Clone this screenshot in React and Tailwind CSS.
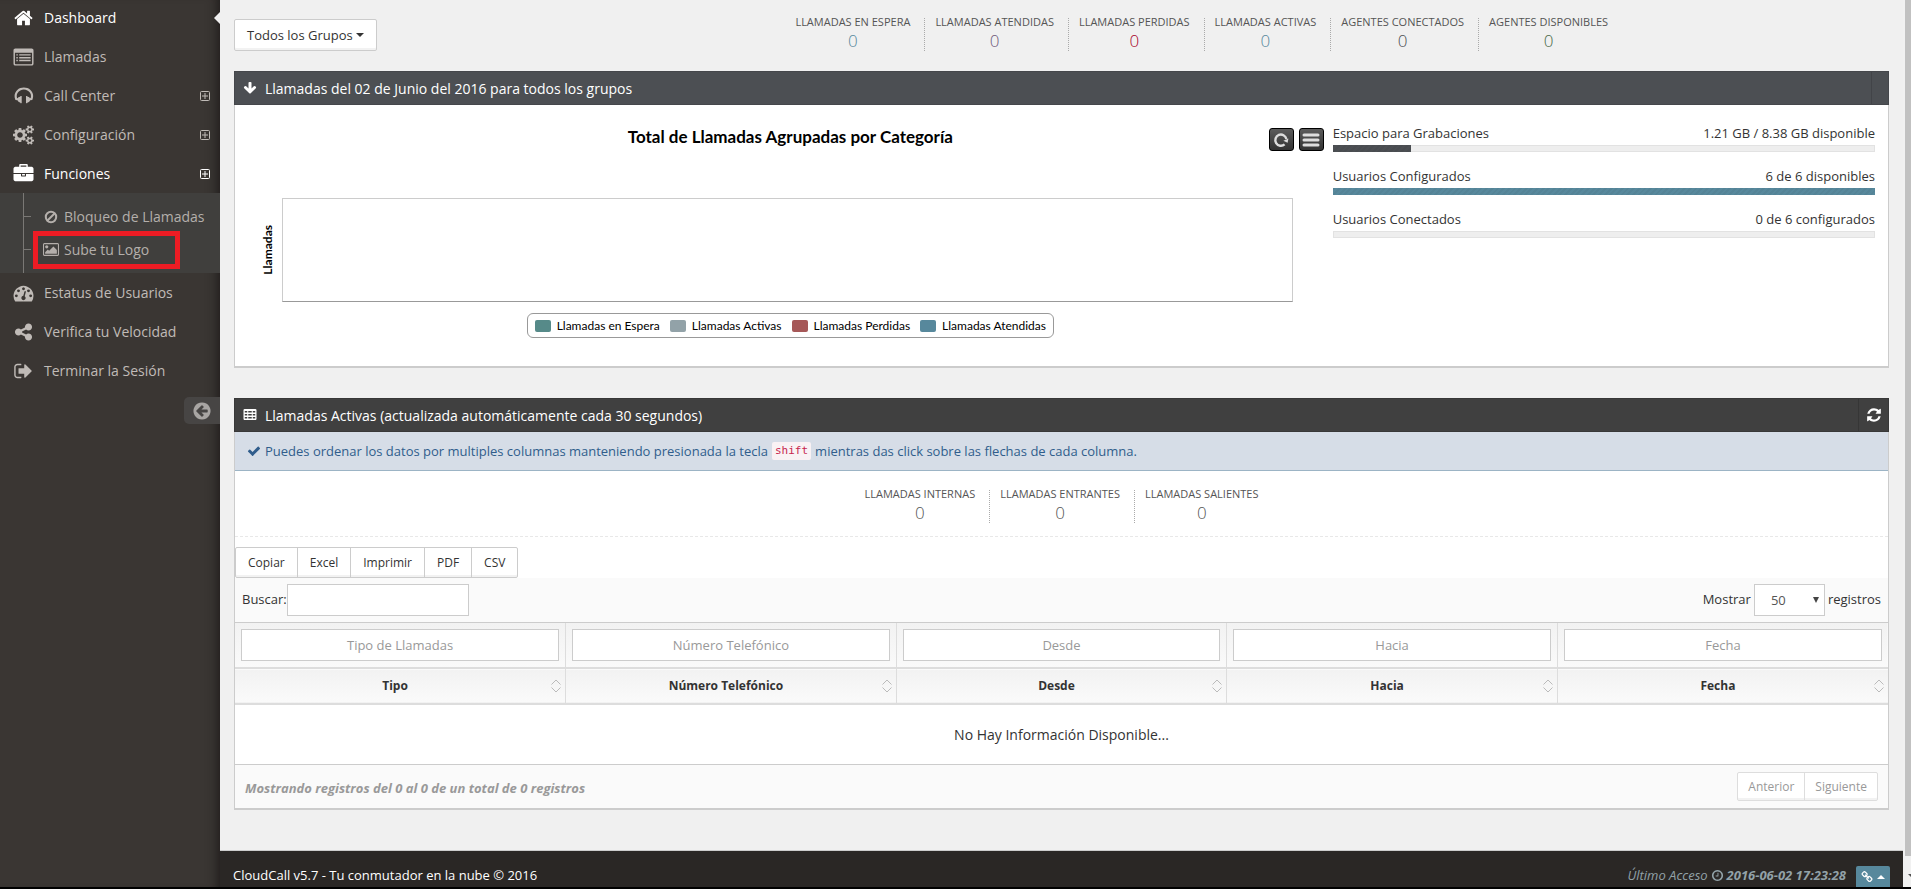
import React from "react";

const PATHS = {
  home: "M1472 992v480q0 26-19 45t-45 19h-384v-384h-256v384h-384q-26 0-45-19t-19-45v-480q0-1 .5-3t.5-3l575-474 575 474q1 2 1 6zm223-69l-62 74q-8 9-21 11h-3q-13 0-21-7l-692-577-692 577q-12 8-24 7-13-2-21-11l-62-74q-8-10-7-23.5t11-21.5l719-599q32-26 76-26t76 26l244 204v-195q0-14 9-23t23-9h192q14 0 23 9t9 23v408l219 182q10 8 11 21.5t-7 23.5z",
  list: "M160 128h1472q66 0 113 47t47 113v1216q0 66-47 113t-113 47h-1472q-66 0-113-47t-47-113v-1216q0-66 47-113t113-47zm-32 384v960q0 64 64 64h1408q64 0 64-64v-960zM256 640h128v128h-128zM512 640h1024v128h-1024zM256 896h128v128h-128zM512 896h1024v128h-1024zM256 1152h128v128h-128zM512 1152h1024v128h-1024z",
  headphones: "M1760 886q0 166-60 314l-20 49-185 33q-22 83-90.5 136.5t-156.5 53.5v32q0 14-9 23t-23 9h-64q-14 0-23-9t-9-23v-576q0-14 9-23t23-9h64q14 0 23 9t9 23v32q71 0 130 35.5t93 95.5l68-12q29-95 29-193 0-148-88-279t-236.5-209-315.5-78-315.5 78-236.5 209-88 279q0 98 29 193l68 12q34-60 93-95.5t130-35.5v-32q0-14 9-23t23-9h64q14 0 23 9t9 23v576q0 14-9 23t-23 9h-64q-14 0-23-9t-9-23v-32q-88 0-156.5-53.5t-90.5-136.5l-185-33-20-49q-60-148-60-314 0-151 67-291t179-242.5 266-163.5 320-61 320 61 266 163.5 179 242.5 67 291z",
  cogs: "M896 896q0-106-75-181t-181-75-181 75-75 181 75 181 181 75 181-75 75-181zm768 512q0-52-38-90t-90-38-90 38-38 90q0 53 37.5 90.5t90.5 37.5 90.5-37.5 37.5-90.5zm0-1024q0-52-38-90t-90-38-90 38-38 90q0 53 37.5 90.5t90.5 37.5 90.5-37.5 37.5-90.5zm-384 421v185q0 10-7 19.5t-16 10.5l-155 24q-11 35-32 76 34 48 90 115 7 11 7 20 0 12-7 19-23 30-82.5 89.5t-78.5 59.5q-11 0-21-7l-115-90q-37 19-77 31-11 108-23 155-7 24-30 24h-186q-11 0-20-7.5t-10-17.5l-23-153q-34-10-75-31l-118 89q-7 7-20 7-11 0-21-8-144-133-144-160 0-9 7-19 10-14 41-53t47-61q-23-44-35-82l-152-24q-10-1-17-9.5t-7-19.5v-185q0-10 7-19.5t16-10.5l155-24q11-35 32-76-34-48-90-115-7-11-7-20 0-12 7-20 22-30 82-89t79-59q11 0 21 7l115 90q34-18 77-32 11-108 23-154 7-24 30-24h186q11 0 20 7.5t10 17.5l23 153q34 10 75 31l118-89q8-7 20-7 11 0 21 8 144 133 144 160 0 8-7 19-12 16-42 54t-45 60q23 48 34 82l152 23q10 2 17 10.5t7 19.5zm640 533v140q0 16-149 31-12 27-30 52 51 113 51 138 0 4-4 7-122 71-124 71-8 0-46-47t-52-68q-20 2-30 2t-30-2q-14 21-52 68t-46 47q-2 0-124-71-4-3-4-7 0-25 51-138-18-25-30-52-149-15-149-31v-140q0-16 149-31 13-29 30-52-51-113-51-138 0-4 4-7 4-2 35-20t59-34 30-16q8 0 46 46.5t52 67.5q20-2 30-2t30 2q51-71 92-112l6-2q4 0 124 70 4 3 4 7 0 25-51 138 17 23 30 52 149 15 149 31zm0-1024v140q0 16-149 31-12 27-30 52 51 113 51 138 0 4-4 7-122 71-124 71-8 0-46-47t-52-68q-20 2-30 2t-30-2q-14 21-52 68t-46 47q-2 0-124-71-4-3-4-7 0-25 51-138-18-25-30-52-149-15-149-31v-140q0-16 149-31 13-29 30-52-51-113-51-138 0-4 4-7 4-2 35-20t59-34 30-16q8 0 46 46.5t52 67.5q20-2 30-2t30 2q51-71 92-112l6-2q4 0 124 70 4 3 4 7 0 25-51 138 17 23 30 52 149 15 149 31z",
  briefcase: "M640 256h512v-128h-512v128zm1152 640v480q0 66-47 113t-113 47h-1472q-66 0-113-47t-47-113v-480h672v160q0 26 19 45t45 19h320q26 0 45-19t19-45v-160h672zm-768 0v128h-256v-128h256zm768-480v384h-1792v-384q0-66 47-113t113-47h352v-160q0-40 28-68t68-28h576q40 0 68 28t28 68v160h352q66 0 113 47t47 113z",
  gauge: "M384 1152q0-53-37.5-90.5t-90.5-37.5-90.5 37.5-37.5 90.5 37.5 90.5 90.5 37.5 90.5-37.5 37.5-90.5zm192-448q0-53-37.5-90.5t-90.5-37.5-90.5 37.5-37.5 90.5 37.5 90.5 90.5 37.5 90.5-37.5 37.5-90.5zm428 481l101-382q6-26-7.5-48.5t-38.5-29.5-48 6.5-30 39.5l-101 382q-60 5-107 43.5t-63 98.5q-20 77 20 146t117 89 146-20 89-117q16-60-6-117t-72-91zm660-33q0-53-37.5-90.5t-90.5-37.5-90.5 37.5-37.5 90.5 37.5 90.5 90.5 37.5 90.5-37.5 37.5-90.5zm-640-640q0-53-37.5-90.5t-90.5-37.5-90.5 37.5-37.5 90.5 37.5 90.5 90.5 37.5 90.5-37.5 37.5-90.5zm448 192q0-53-37.5-90.5t-90.5-37.5-90.5 37.5-37.5 90.5 37.5 90.5 90.5 37.5 90.5-37.5 37.5-90.5zm320 448q0 261-141 483-19 29-54 29h-1402q-35 0-54-29-141-221-141-483 0-182 71-348t191-286 286-191 348-71 348 71 286 191 191 286 71 348z",
  share: "M1344 1024q133 0 226.5 93.5t93.5 226.5-93.5 226.5-226.5 93.5-226.5-93.5-93.5-226.5q0-12 2-34l-360-180q-92 86-218 86-133 0-226.5-93.5t-93.5-226.5 93.5-226.5 226.5-93.5q126 0 218 86l360-180q-2-22-2-34 0-133 93.5-226.5t226.5-93.5 226.5 93.5 93.5 226.5-93.5 226.5-226.5 93.5q-126 0-218-86l-360 180q2 22 2 34t-2 34l360 180q92-86 218-86z",
  signOut: "M704 1440q0 4 1 20t.5 26.5-3 23.5-10 19.5-20.5 6.5h-320q-119 0-203.5-84.5t-84.5-203.5v-704q0-119 84.5-203.5t203.5-84.5h320q13 0 22.5 9.5t9.5 22.5q0 4 1 20t.5 26.5-3 23.5-10 19.5-20.5 6.5h-320q-66 0-113 47t-47 113v704q0 66 47 113t113 47h312l11.5 1 11.5 3 8 5.5 7 9 2 13.5zm928-544q0 26-19 45l-544 544q-19 19-45 19t-45-19-19-45v-288h-448q-26 0-45-19t-19-45v-384q0-26 19-45t45-19h448v-288q0-26 19-45t45-19 45 19l544 544q19 19 19 45z",
  circleLeft: "M1408 960v-128q0-26-19-45t-45-19h-502l189-189q19-19 19-45t-19-45l-91-91q-18-18-45-18t-45 18l-362 362-91 91q-18 18-18 45t18 45l91 91 362 362q18 18 45 18t45-18l91-91q18-18 18-45t-18-45l-189-189h502q26 0 45-19t19-45zm256-64q0 209-103 385.5t-279.5 279.5-385.5 103-385.5-103-279.5-279.5-103-385.5 103-385.5 279.5-279.5 385.5-103 385.5 103 279.5 279.5 103 385.5z",
  refresh: "M1639 1056q0 5-1 7-64 268-268 434.5t-478 166.5q-146 0-282.5-55t-243.5-157l-129 129q-19 19-45 19t-45-19-19-45v-448q0-26 19-45t45-19h448q26 0 45 19t19 45-19 45l-137 137q71 66 161 102t187 36q134 0 250-65t186-179q11-17 53-117 8-23 30-23h192q13 0 22.5 9.5t9.5 22.5zm25-800v448q0 26-19 45t-45 19h-448q-26 0-45-19t-19-45 19-45l138-138q-148-137-349-137-134 0-250 65t-186 179q-11 17-53 117-8 23-30 23h-199q-13 0-22.5-9.5t-9.5-22.5v-7q65-268 270-434.5t480-166.5q146 0 284 55.5t245 156.5l130-129q19-19 45-19t45 19 19 45z",
  check: "M1671 566q0 40-28 68l-724 724-136 136q-28 28-68 28t-68-28l-136-136-362-362q-28-28-28-68t28-68l136-136q28-28 68-28t68 28l294 295 656-657q28-28 68-28t68 28l136 136q28 28 28 68z",
  arrowDown: "M1675 832q0 53-37 90l-651 652q-39 37-91 37-53 0-90-37l-651-652q-38-36-38-90 0-53 38-91l74-75q39-37 91-37 53 0 90 37l294 294v-704q0-52 38-90t90-38h128q52 0 90 38t38 90v704l294-294q37-37 90-37 52 0 91 37l75 75q37 39 37 91z",
  clock: "M1024 544v448q0 14-9 23t-23 9h-320q-14 0-23-9t-9-23v-64q0-14 9-23t23-9h224v-352q0-14 9-23t23-9h64q14 0 23 9t9 23zm416 352q0-148-73-273t-198-198-273-73-273 73-198 198-73 273 73 273 198 198 273 73 273-73 198-198 73-273zm224 0q0 209-103 385.5t-279.5 279.5-385.5 103-385.5-103-279.5-279.5-103-385.5 103-385.5 279.5-279.5 385.5-103 385.5 103 279.5 279.5 103 385.5z",
  link: "M1520 1216q0-40-28-68l-208-208q-28-28-68-28-42 0-72 32 3 3 19 18.5t21.5 21.5 15 19 13 25.5 3.5 27.5q0 40-28 68t-68 28q-15 0-27.5-3.5t-25.5-13-19-15-21.5-21.5-18.5-19q-33 31-33 73 0 40 28 68l206 207q27 27 68 27 40 0 68-26l147-146q28-28 28-67zm-703-705q0-40-28-68l-206-207q-28-28-68-28-39 0-68 27l-147 146q-28 28-28 67 0 40 28 68l208 208q27 27 68 27 42 0 72-31-3-3-19-18.5t-21.5-21.5-15-19-13-25.5-3.5-27.5q0-40 28-68t68-28q15 0 27.5 3.5t25.5 13 19 15 21.5 21.5 18.5 19q33-31 33-73zm895 705q0 120-85 203l-147 146q-83 83-203 83-121 0-204-85l-206-207q-83-83-83-203 0-123 88-209l-88-88q-86 88-208 88-120 0-204-84l-208-208q-84-84-84-204t85-203l147-146q83-83 203-83 121 0 204 85l206 207q83 83 83 203 0 123-88 209l88 88q86-88 208-88 120 0 204 84l208 208q84 84 84 204z",
  table: "M224 128h1344q66 0 113 47t47 113v1088q0 66-47 113t-113 47h-1344q-66 0-113-47t-47-113v-1088q0-66 47-113t113-47zm0 256v192h320v-192zm448 0v192h448v-192zm576 0v192h320v-192zM224 768v192h320v-192zm448 0v192h448v-192zm576 0v192h320v-192zM224 1152v192h320v-192zm448 0v192h448v-192zm576 0v192h320v-192z",
  picture: "M640 576q0 80-56 136t-136 56-136-56-56-136 56-136 136-56 136 56 56 136zm1024 384v448h-1408v-192l320-320 160 160 512-512zm96-704h-1600q-13 0-22.5 9.5t-9.5 22.5v1216q0 13 9.5 22.5t22.5 9.5h1600q13 0 22.5-9.5t9.5-22.5v-1216q0-13-9.5-22.5t-22.5-9.5zm160 32v1216q0 66-47 113t-113 47h-1600q-66 0-113-47t-47-113v-1216q0-66 47-113t113-47h1600q66 0 113 47t47 113z",
};

function Icon({ name, className = "", wide = false }) {
  return (
    <svg viewBox={wide ? "0 0 1920 1792" : "0 0 1792 1792"} fill="currentColor" fillRule="evenodd" aria-hidden="true" className={className}>
      <path d={PATHS[name]} />
    </svg>
  );
}

function Ban({ className }) {
  return (
    <svg viewBox="0 0 14 14" fill="none" stroke="currentColor" strokeWidth="2" aria-hidden="true" className={className}>
      <circle cx="7" cy="7" r="5.2" />
      <path d="M3.5 10.5l7-7" />
    </svg>
  );
}

function PlusBox() {
  return (
    <svg viewBox="0 0 10 10" fill="none" stroke="currentColor" strokeWidth="1" aria-hidden="true" className="ml-auto h-2.5 w-2.5">
      <rect x="0.5" y="0.5" width="9" height="9" rx="1" />
      <path d="M2 5h6M5 2v6" />
    </svg>
  );
}

const NAV_TOP = [
  { label: "Dashboard", icon: "home", active: true, current: true },
  { label: "Llamadas", icon: "list" },
  { label: "Call Center", icon: "headphones", expandable: true },
  { label: "Configuración", icon: "cogs", wide: true, expandable: true },
  { label: "Funciones", icon: "briefcase", active: true, expandable: true },
];

const NAV_BOTTOM = [
  { label: "Estatus de Usuarios", icon: "gauge" },
  { label: "Verifica tu Velocidad", icon: "share" },
  { label: "Terminar la Sesión", icon: "signOut" },
];

function NavItem({ item }) {
  return (
    <li className="relative">
      <a
        href="#"
        className={
          item.active
            ? "flex h-[39px] items-center gap-2.5 pl-[13px] pr-2.5 font-medium text-white"
            : "flex h-[39px] items-center gap-2.5 pl-[13px] pr-2.5 text-[#c0bbb7]"
        }
      >
        <Icon name={item.icon} wide={item.wide} className="h-5 w-[21px]" />
        <span>{item.label}</span>
        {item.expandable && <PlusBox />}
      </a>
      {item.current && (
        <svg viewBox="0 0 6 12" aria-hidden="true" className="absolute top-3.5 right-0 h-3 w-1.5">
          <path d="M6 0v12L0 6z" fill="#f0f0f0" />
        </svg>
      )}
    </li>
  );
}

function Sidebar() {
  return (
    <aside className="w-[220px] shrink-0 bg-[#3a3633] text-sm shadow-[inset_-12px_0_12px_-10px_#1d1a19]">
      <nav aria-label="Principal">
        <ul className="-mt-0.5">
          {NAV_TOP.map((item) => (
            <NavItem key={item.label} item={item} />
          ))}
          <li className="bg-[#403f3d]">
            <ul className="ml-[23px] border-l border-[#7a7875] py-[7px] text-[#b4afab]">
              <li className="flex h-[33px] items-center">
                <span className="h-px w-[7px] bg-[#7a7875]" />
                <a href="#" className="ml-3 flex items-center gap-[5px]">
                  <Ban className="h-3.5 w-4" />
                  Bloqueo de Llamadas
                </a>
              </li>
              <li className="relative flex h-[33px] items-center">
                <span className="h-px w-[7px] bg-[#7a7875]" />
                <a href="#" className="ml-3 flex items-center gap-[5px]">
                  <Icon name="picture" wide className="h-[15px] w-4" />
                  Sube tu Logo
                </a>
                <span className="absolute -top-0.5 left-[9px] h-[38px] w-[147px] border-5 border-[#ed1c24]" />
              </li>
            </ul>
          </li>
          {NAV_BOTTOM.map((item) => (
            <NavItem key={item.label} item={item} />
          ))}
        </ul>
      </nav>
      <button type="button" aria-label="Minimizar menú" className="mt-[7px] ml-auto flex h-[27px] w-9 items-center rounded-l-[5px] bg-[#474544] pl-2 text-[#a8a5a3]">
        <Icon name="circleLeft" className="h-5 w-5" />
      </button>
    </aside>
  );
}

const TOP_STATS = [
  ["LLAMADAS EN ESPERA", "text-[#57889c]"],
  ["LLAMADAS ATENDIDAS", "text-[#6e587a]"],
  ["LLAMADAS PERDIDAS", "text-[#a90329]"],
  ["LLAMADAS ACTIVAS", "text-[#57889c]"],
  ["AGENTES CONECTADOS", "text-[#4c4f53]"],
  ["AGENTES DISPONIBLES", "text-[#496949]"],
];

const CALL_STATS = [
  ["LLAMADAS INTERNAS", "text-[#555555]"],
  ["LLAMADAS ENTRANTES", "text-[#555555]"],
  ["LLAMADAS SALIENTES", "text-[#555555]"],
];

function Stats({ items }) {
  return (
    <dl className="flex justify-center">
      {items.map(([label, color]) => (
        <div key={label} className="border-r border-dotted border-[#aaaaaa] pr-3.5 pl-2.5 text-center last:border-r-0 last:pr-2.5">
          <dt className="text-[11px] leading-[8px] text-[#555555]">{label}</dt>
          <dd className={`pt-1 text-[17px] leading-[21px] font-light ${color}`}>0</dd>
        </div>
      ))}
    </dl>
  );
}

const LEGEND = [
  ["Llamadas en Espera", "bg-[#568a89]"],
  ["Llamadas Activas", "bg-[#92a2a8]"],
  ["Llamadas Perdidas", "bg-[#a65858]"],
  ["Llamadas Atendidas", "bg-[#57889c]"],
];

function Chart() {
  return (
    <div className="pt-[23px] pb-7 font-['Trebuchet_MS',Lato,sans-serif] text-black">
      <div className="grid h-[23px] grid-cols-[1fr_auto_1fr] items-start">
        <h3 className="col-start-2 text-[17px] leading-[18px] font-bold">Total de Llamadas Agrupadas por Categoría</h3>
        <div className="flex justify-end gap-[5px] pr-[9px]">
          <button type="button" aria-label="Recargar" className="flex h-[23px] w-[25px] items-center justify-center rounded-[3px] border border-black bg-linear-to-b from-[#5c5c5c] to-[#333333]">
            <svg viewBox="0 0 16 16" fill="none" stroke="#dddddd" strokeWidth="2.4" aria-hidden="true" className="h-4 w-4">
              <path d="M11.6 12.4A5.6 5.6 0 1 1 13.4 7" />
              <path d="M15.4 6.4l-.8 4.4-4.2-2z" fill="#dddddd" stroke="none" />
            </svg>
          </button>
          <button type="button" aria-label="Menú de la gráfica" className="flex h-[23px] w-[25px] items-center justify-center rounded-[3px] border border-black bg-linear-to-b from-[#5c5c5c] to-[#333333]">
            <svg viewBox="0 0 18 14" fill="none" stroke="#dddddd" strokeWidth="3" strokeLinecap="round" aria-hidden="true" className="h-3.5 w-[18px]">
              <path d="M2 2h14M2 7h14M2 12h14" />
            </svg>
          </button>
        </div>
      </div>
      <div className="mt-[47px] flex h-[104px] pr-10">
        <div className="flex w-[34px] items-center pl-3">
          <span className="rotate-180 text-xs leading-4 font-bold [writing-mode:vertical-rl]">Llamadas</span>
        </div>
        <div className="flex-1 border border-[#cccccc] border-b-[#999999]" />
      </div>
      <ul className="mx-auto mt-[11px] flex h-[25px] w-fit items-center gap-2.5 rounded-md border border-[#999999] px-[7px] text-xs leading-4">
        {LEGEND.map(([label, color]) => (
          <li key={label} className="flex items-center gap-1.5">
            <span className={`h-3 w-4 rounded-xs ${color}`} />
            {label}
          </li>
        ))}
      </ul>
    </div>
  );
}

const STRIPES = "bg-[repeating-linear-gradient(135deg,#0000000a_0_2px,transparent_2px_4px)]";

function Meter({ label, value, percent, color }) {
  return (
    <div>
      <div className="flex justify-between leading-5">
        <span>{label}</span>
        <span>{value}</span>
      </div>
      <div className="mt-0.5 h-[7px] bg-[#eeeeee] shadow-[inset_0_0_0_1px_#e2e2e2]">
        <div className={`h-full ${STRIPES} ${color}`} style={{ width: `${percent}%` }} />
      </div>
    </div>
  );
}

const COLUMNS = [
  ["Tipo", "Tipo de Llamadas"],
  ["Número Telefónico", "Número Telefónico"],
  ["Desde", "Desde"],
  ["Hacia", "Hacia"],
  ["Fecha", "Fecha"],
];

function SortIcon() {
  return (
    <svg viewBox="0 0 10 14" fill="none" stroke="#bbbbbb" strokeWidth="1" aria-hidden="true" className="h-3.5 w-2.5">
      <path d="M0.5 5.5L5 1l4.5 4.5M0.5 8.5L5 13l4.5-4.5" />
    </svg>
  );
}

function CallsTable() {
  return (
    <table className="w-full table-fixed border-collapse">
      <thead>
        <tr className="h-[45px] bg-linear-to-b from-[#f2f2f2] to-[#fafafa]">
          {COLUMNS.map(([name, hint]) => (
            <td key={name} className="border-r border-[#dddddd] px-1.5 py-0 last:border-r-0">
              <input type="text" aria-label={`Filtrar por ${name}`} placeholder={hint} className="block h-8 w-full border border-[#cccccc] bg-white px-2.5 text-center text-[13px] placeholder:text-[#999999]" />
            </td>
          ))}
        </tr>
        <tr className="h-9 border-y-2 border-[#dddddd] bg-linear-to-b from-[#f2f2f2] to-[#fafafa]">
          {COLUMNS.map(([name]) => (
            <th key={name} scope="col" className="border-r border-[#dddddd] px-1 py-0 text-xs font-bold last:border-r-0">
              <button type="button" className="flex w-full items-center">
                <span className="flex-1">{name}</span>
                <SortIcon />
              </button>
            </th>
          ))}
        </tr>
      </thead>
      <tbody>
        <tr className="h-[60px]">
          <td colSpan={5} className="text-center text-sm">No Hay Información Disponible...</td>
        </tr>
      </tbody>
    </table>
  );
}

function Content() {
  return (
    <main className="flex-1 px-3.5 pb-10">
      <div className="-mx-3.5 grid h-[71px] grid-cols-12 items-start">
        <div className="col-span-2 px-3.5 pt-[19px]">
          <button type="button" className="flex h-8 items-center gap-[3px] rounded-xs border border-[#cccccc] bg-white px-3 shadow-[inset_0_-2px_0_#0000000d]">
            Todos los Grupos
            <svg viewBox="0 0 8 4" aria-hidden="true" className="h-1 w-2"><path d="M0 0h8L4 4z" fill="currentColor" /></svg>
          </button>
        </div>
        <div className="col-span-10 px-3.5 pt-[18px]">
          <Stats items={TOP_STATS} />
        </div>
      </div>

      <section>
        <header className="flex h-[34px] items-center gap-2 border border-[#45474b] bg-[#4c4f53] pl-2 text-white">
          <Icon name="arrowDown" className="h-3.5 w-3.5" />
          <h2 className="pt-0.5 text-sm">Llamadas del 02 de Junio del 2016 para todos los grupos</h2>
          <span className="ml-auto w-[17px] self-stretch border-l border-[#424448]" />
        </header>
        <div className="grid grid-cols-[2fr_1fr] border border-t-0 border-b-2 border-[#cccccc] bg-white px-[13px]">
          <Chart />
          <div className="flex flex-col gap-3.5 pt-[18px]">
            <Meter label="Espacio para Grabaciones" value="1.21 GB / 8.38 GB disponible" percent={14.4} color="bg-[#4c4f53]" />
            <Meter label="Usuarios Configurados" value="6 de 6 disponibles" percent={100} color="bg-[#57889c]" />
            <Meter label="Usuarios Conectados" value="0 de 6 configurados" percent={0} color="bg-[#57889c]" />
          </div>
        </div>
      </section>

      <section className="mt-[30px]">
        <header className="flex h-[34px] items-center gap-2 border border-[#383838] bg-[#404040] pl-2 text-white">
          <Icon name="table" className="h-3.5 w-3.5" />
          <h2 className="pt-0.5 text-sm">Llamadas Activas (actualizada automáticamente cada 30 segundos)</h2>
          <button type="button" aria-label="Actualizar" className="ml-auto flex w-[30px] items-center justify-center self-stretch border-l border-[#363636]">
            <Icon name="refresh" className="h-4 w-4" />
          </button>
        </header>
        <div className="border border-t-0 border-b-2 border-[#cccccc] bg-white">
          <p className="flex h-[39px] items-center border-b border-[#9cb4c5] bg-[#d6dde7] pl-3 text-[#305d8c]">
            <Icon name="check" className="mr-1 h-3.5 w-3.5" />
            Puedes ordenar los datos por multiples columnas manteniendo presionada la tecla
            <code className="mx-1 rounded-xs bg-[#f9f2f4] px-[3px] font-['DejaVu_Sans_Mono',monospace] text-[11px] leading-[18px] text-[#c7254e]">shift</code>
            mientras das click sobre las flechas de cada columna.
          </p>
          <div className="border-b border-dashed border-[#e8e8e8] pt-[19px] pb-[13px]">
            <Stats items={CALL_STATS} />
          </div>
          <div className="mt-2.5 flex">
            <div className="flex divide-x divide-[#cccccc] rounded-xs border border-[#cccccc] bg-white text-xs shadow-[inset_0_-2px_0_#0000000d]">
              {["Copiar", "Excel", "Imprimir", "PDF", "CSV"].map((label) => (
                <button key={label} type="button" className="h-[29px] px-3">{label}</button>
              ))}
            </div>
          </div>
          <div className="flex h-[45px] items-center justify-between border-b border-[#cccccc] bg-[#fafafa] px-[7px]">
            <label className="flex items-center">
              <span className="pb-0.5">Buscar:</span>
              <input type="search" className="h-8 w-[182px] border border-[#cccccc] bg-white px-2.5" />
            </label>
            <label className="flex items-center gap-[3px]">
              <span className="pb-0.5">Mostrar</span>
              <span className="relative">
                <select defaultValue="50" className="block h-8 w-[71px] appearance-none border border-[#cccccc] bg-white pl-4 text-[#555555]">
                  <option>10</option>
                  <option>50</option>
                  <option>100</option>
                </select>
                <svg viewBox="0 0 6 6" aria-hidden="true" className="pointer-events-none absolute top-[13px] right-1.5 h-1.5 w-1.5"><path d="M0 0h6L3 6z" fill="#444444" /></svg>
              </span>
              <span className="pb-0.5">registros</span>
            </label>
          </div>
          <CallsTable />
          <div className="flex h-11 items-center justify-between border-t border-[#cccccc] bg-[#fafafa] px-2.5">
            <p className="pt-0.5 font-bold text-[#999999] italic">Mostrando registros del 0 al 0 de un total de 0 registros</p>
            <div className="flex divide-x divide-[#dddddd] rounded-xs border border-[#dddddd] bg-white text-xs text-[#999999] shadow-[inset_0_-2px_0_#0000000d]">
              <button type="button" className="h-[27px] px-2.5">Anterior</button>
              <button type="button" className="h-[27px] px-2.5">Siguiente</button>
            </div>
          </div>
        </div>
      </section>
    </main>
  );
}

function Footer() {
  return (
    <footer className="flex h-[37px] items-end border-t border-[#cccccc] bg-[#2a2725] px-[13px] text-white">
      <p className="pb-0.5 leading-5">CloudCall v5.7 - Tu conmutador en la nube © 2016</p>
      <p className="ml-auto flex items-center gap-[3px] pb-0.5 leading-5 text-[#92a2a8] italic">
        Último Acceso
        <Icon name="clock" className="h-[13px] w-[13px]" />
        <strong>2016-06-02 17:23:28</strong>
      </p>
      <button type="button" aria-label="Enlaces" className="ml-2.5 flex h-[21px] w-[34px] items-center justify-center gap-1 rounded-t-xs bg-[#57889c]">
        <Icon name="link" className="h-3 w-3" />
        <svg viewBox="0 0 8 4" aria-hidden="true" className="h-1 w-2"><path d="M0 4h8L4 0z" fill="currentColor" /></svg>
      </button>
    </footer>
  );
}

export default function App() {
  return (
    <div className="flex h-screen flex-col overflow-hidden bg-[#f0f0f0] font-['Open_Sans',sans-serif] text-[13px] leading-5 text-[#333333]">
      <div className="flex min-h-0 flex-1">
        <Sidebar />
        <div className="flex min-w-0 flex-1 flex-col">
          <Content />
          <Footer />
        </div>
        <div aria-hidden="true" className="flex w-2 flex-col bg-[#f1f1f1] pl-0.5">
          <div className="flex-1 bg-[#c1c1c1]" />
          <div className="flex h-[31px] items-center justify-end pt-2">
            <svg viewBox="0 0 3 4" className="h-1 w-[3px]"><path d="M0 0h3v3z" fill="#505050" /></svg>
          </div>
        </div>
      </div>
      <div className="h-0.5 bg-black" />
    </div>
  );
}
